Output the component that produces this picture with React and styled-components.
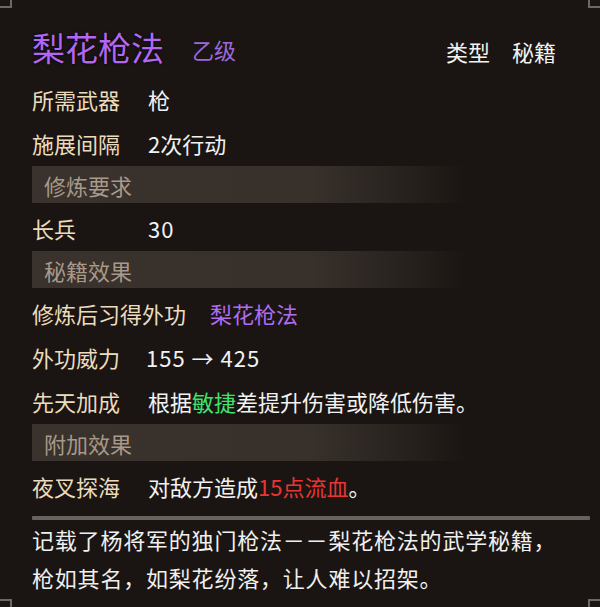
import React from 'react';
import styled, { createGlobalStyle } from 'styled-components';

const Global = createGlobalStyle`
  html, body {
    margin: 0;
    padding: 0;
    background: #1a1512;
  }
  body {
    font-family: "Noto Sans CJK SC", "Noto Sans", sans-serif;
  }
`;

const Panel = styled.div`
  position: relative;
  box-sizing: border-box;
  width: 600px;
  height: 607px;
  padding: 22px 10px 0 32px;
  background: #1a1512;
  overflow: hidden;
`;

const Corner = styled.div`
  position: absolute;
  width: 10px;
  height: 6px;
  border-color: #6d6862;
  border-style: solid;
  border-width: 0;
  ${(p) => (p.$top ? 'top: 0;' : 'bottom: 0;')}
  ${(p) => (p.$left ? 'left: 0;' : 'right: 0;')}
  ${(p) => (p.$top ? 'border-bottom-width: 2px;' : 'border-top-width: 2px;')}
  ${(p) => (p.$left ? 'border-right-width: 2px;' : 'border-left-width: 2px;')}
`;

const TitleRow = styled.div`
  display: flex;
  align-items: center;
  height: 50px;
  padding-right: 34px;
  margin-bottom: 5px;
`;

const Title = styled.div`
  font-size: 33px;
  line-height: 1;
  color: #b366f2;
  text-shadow: 0 0 3px #000;
`;

const Grade = styled.div`
  margin-left: 28px;
  margin-top: 4px;
  font-size: 22px;
  color: #9d69da;
`;

const TypeBox = styled.div`
  margin-left: auto;
  margin-top: 8px;
  display: flex;
  gap: 22px;
  font-size: 22px;
  color: #f2f2f2;
`;

const Row = styled.div`
  display: flex;
  align-items: center;
  height: 44px;
  font-size: 22px;
`;

const Label = styled.div`
  width: ${(p) => p.$w || 116}px;
  flex-shrink: 0;
  color: #ecdcbd;
`;

const Value = styled.div`
  color: #f2f2f2;
  white-space: nowrap;
  letter-spacing: ${(p) => (p.$num ? '1px' : '0')};
`;

const Hl = styled.span`
  color: ${(p) => p.$c};
`;

const Section = styled.div`
  height: 37px;
  display: flex;
  align-items: center;
  padding-left: 12px;
  margin: 1px 0 3px;
  font-size: 22px;
  color: #a8998a;
  background: linear-gradient(
    90deg,
    #39322d 0%,
    #37302b 50%,
    rgba(55, 48, 43, 0.5) 66%,
    rgba(26, 21, 18, 0) 78%
  );
`;

const Divider = styled.div`
  height: 4px;
  margin: 8px 0 0;
  background: #67625c;
  border-radius: 1px;
`;

const Desc = styled.div`
  font-size: 22px;
  line-height: 38px;
  letter-spacing: 0.8px;
  color: #f0f0f0;
`;

export default function App() {
  return (
    <>
      <Global />
      <Panel>
        <Corner $top $left />
        <Corner $top />
        <Corner $left />
        <Corner />

        <TitleRow>
          <Title>梨花枪法</Title>
          <Grade>乙级</Grade>
          <TypeBox>
            <span>类型</span>
            <span>秘籍</span>
          </TypeBox>
        </TitleRow>

        <Row>
          <Label>所需武器</Label>
          <Value>枪</Value>
        </Row>
        <Row>
          <Label>施展间隔</Label>
          <Value>2次行动</Value>
        </Row>

        <Section>修炼要求</Section>
        <Row>
          <Label>长兵</Label>
          <Value $num>30</Value>
        </Row>

        <Section>秘籍效果</Section>
        <Row>
          <Label $w={178}>修炼后习得外功</Label>
          <Value>
            <Hl $c="#b06cf0">梨花枪法</Hl>
          </Value>
        </Row>
        <Row>
          <Label $w={114}>外功威力</Label>
          <Value $num>155 → 425</Value>
        </Row>
        <Row>
          <Label>先天加成</Label>
          <Value>
            根据<Hl $c="#3fe26e">敏捷</Hl>差提升伤害或降低伤害。
          </Value>
        </Row>

        <Section>附加效果</Section>
        <Row>
          <Label>夜叉探海</Label>
          <Value>
            对敌方造成<Hl $c="#ea3434">15点流血</Hl>。
          </Value>
        </Row>

        <Divider />
        <Desc>
          记载了杨将军的独门枪法－－梨花枪法的武学秘籍，
          <br />
          枪如其名，如梨花纷落，让人难以招架。
        </Desc>
      </Panel>
    </>
  );
}
